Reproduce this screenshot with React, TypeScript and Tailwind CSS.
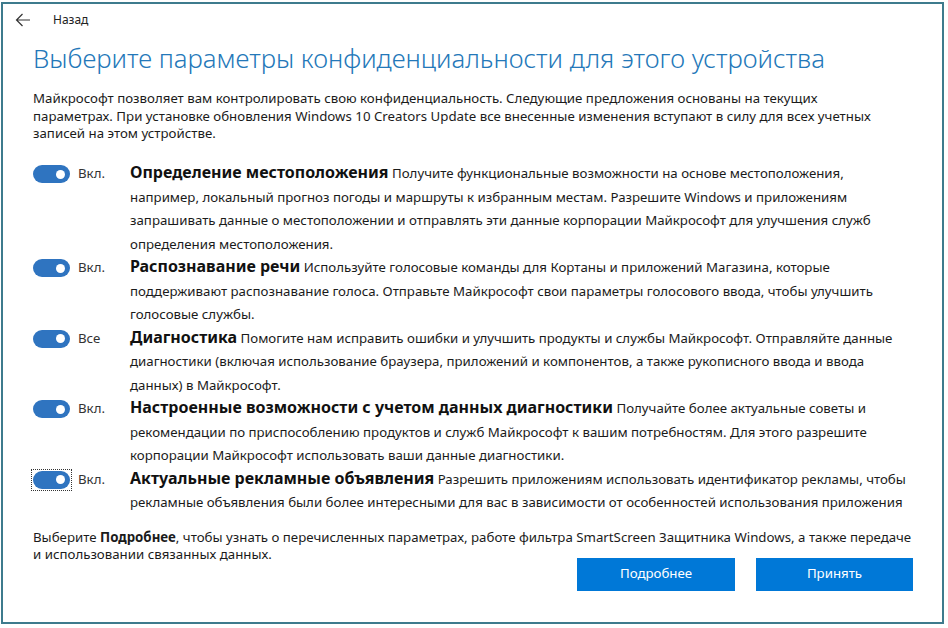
import React from "react";

const rows: { label: string; head: string; lines: string[] }[] = [
  {
    label: "Вкл.",
    head: "Определение местоположения",
    lines: [
      " Получите функциональные возможности на основе местоположения,",
      "например, локальный прогноз погоды и маршруты к избранным местам. Разрешите Windows и приложениям",
      "запрашивать данные о местоположении и отправлять эти данные корпорации Майкрософт для улучшения служб",
      "определения местоположения.",
    ],
  },
  {
    label: "Вкл.",
    head: "Распознавание речи",
    lines: [
      " Используйте голосовые команды для Кортаны и приложений Магазина, которые",
      "поддерживают распознавание голоса. Отправьте Майкрософт свои параметры голосового ввода, чтобы улучшить",
      "голосовые службы.",
    ],
  },
  {
    label: "Все",
    head: "Диагностика",
    lines: [
      " Помогите нам исправить ошибки и улучшить продукты и службы Майкрософт. Отправляйте данные",
      "диагностики (включая использование браузера, приложений и компонентов, а также рукописного ввода и ввода",
      "данных) в Майкрософт.",
    ],
  },
  {
    label: "Вкл.",
    head: "Настроенные возможности с учетом данных диагностики",
    lines: [
      " Получайте более актуальные советы и",
      "рекомендации по приспособлению продуктов и служб Майкрософт к вашим потребностям. Для этого разрешите",
      "корпорации Майкрософт использовать ваши данные диагностики.",
    ],
  },
  {
    label: "Вкл.",
    head: "Актуальные рекламные объявления",
    lines: [
      " Разрешить приложениям использовать идентификатор рекламы, чтобы",
      "рекламные объявления были более интересными для вас в зависимости от особенностей использования приложения",
    ],
  },
];

function Toggle({ focused }: { focused?: boolean }) {
  return (
    <div className={focused ? "mt-[1px] -ml-[2px] p-[1px] border border-dotted border-[#333] w-[41px]" : "mt-[3px]"}>
      <div className="w-[37px] h-[18px] rounded-full bg-[#2f74c0] flex items-center justify-end pr-[5px]">
        <div className="w-[9px] h-[9px] rounded-full bg-white" />
      </div>
    </div>
  );
}

export default function App() {
  return (
    <div
      className="w-[948px] h-[628px] bg-white pl-[1px] pt-[2px] text-[#1b1b1b]"
      style={{ fontFamily: '"Noto Sans", "Liberation Sans", sans-serif' }}
    >
      <div className="w-[943px] h-[622px] border-2 border-[#3e7b8d] flex flex-col">
        <div className="h-[32px] flex items-center pl-[12px]">
          <svg width="16" height="14" viewBox="0 0 16 14" className="text-[#333]">
            <path d="M15 7H1.5M7.5 1L1.5 7l6 6" fill="none" stroke="currentColor" strokeWidth="1.2" />
          </svg>
          <span className="ml-[22px] text-[12px] text-[#222]">Назад</span>
        </div>
        <h1 className="mt-[5px] pl-[30px] text-[25.75px] leading-[34px] font-light text-[#2478b9] whitespace-nowrap">
          Выберите параметры конфиденциальности для этого устройства
        </h1>
        <p className="mt-[15px] pl-[30px] text-[13.27px] leading-[17.5px] whitespace-nowrap">
          Майкрософт позволяет вам контролировать свою конфиденциальность. Следующие предложения основаны на текущих
          <br />
          параметрах. При установке обновления Windows 10 Creators Update все внесенные изменения вступают в силу для всех учетных
          <br />
          записей на этом устройстве.
        </p>
        <div className="mt-[19.5px] pl-[30px] flex flex-col">
          {rows.map((r, i) => (
            <div key={i} className="flex">
              <div className="w-[97px] flex items-start shrink-0">
                <Toggle focused={i === 4} />
                <span className={(i === 4 ? "ml-[6px]" : "ml-[8px]") + " text-[13.27px] leading-[23.5px] text-[#333]"}>{r.label}</span>
              </div>
              <p className="text-[13.27px] leading-[23.5px] whitespace-nowrap">
                <span className="text-[16px] leading-[16px] font-bold text-[#111]">{r.head}</span>
                {r.lines.map((l, j) => (
                  <React.Fragment key={j}>
                    {j > 0 && <br />}
                    {l}
                  </React.Fragment>
                ))}
              </p>
            </div>
          ))}
        </div>
        <p className="mt-[14px] pl-[30px] text-[13.27px] leading-[17px] whitespace-nowrap">
          Выберите <b>Подробнее</b>, чтобы узнать о перечисленных параметрах, работе фильтра SmartScreen Защитника Windows, а также передаче
          <br />
          и использовании связанных данных.
        </p>
        <div className="-mt-[5px] pr-[29px] flex justify-end gap-[21px]">
          <button className="w-[158px] h-[33px] bg-[#0078d7] text-white text-[13.27px]">Подробнее</button>
          <button className="w-[157px] h-[33px] bg-[#0078d7] text-white text-[13.27px]">Принять</button>
        </div>
      </div>
    </div>
  );
}
